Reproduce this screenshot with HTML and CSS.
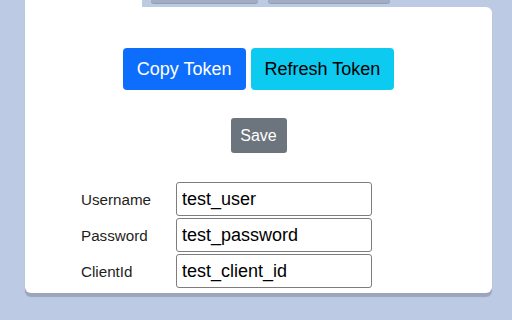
FILE: index.html
```html
<!DOCTYPE html>
<html lang="en">
<head>
    <meta charset="UTF-8">
    <title>Token Settings</title>
    <link rel="stylesheet" href="styles.css">
</head>
<body>
    <div class="container">
        <nav class="tabs">
            <div class="tab active"></div>
            <div class="tab tab-one"></div>
            <div class="tab tab-two"></div>
        </nav>

        <div class="card">
            <div class="token-actions">
                <button class="btn btn-copy">Copy Token</button>
                <button class="btn btn-refresh">Refresh Token</button>
            </div>

            <div class="save-row">
                <button class="btn btn-save">Save</button>
            </div>

            <form class="credentials">
                <label for="username">Username</label>
                <input type="text" id="username" value="test_user">

                <label for="password">Password</label>
                <input type="text" id="password" value="test_password">

                <label for="clientId">ClientId</label>
                <input type="text" id="clientId" value="test_client_id">
            </form>
        </div>
    </div>
</body>
</html>
```

FILE: styles.css
```css
* {
    margin: 0;
    padding: 0;
    box-sizing: border-box;
}

body {
    font-family: 'Liberation Sans', Arial, Helvetica, sans-serif;
    background: #bdcae3;
    height: 320px;
    overflow: hidden;
}

.container {
    width: 467px;
    margin-left: 25px;
}

.tabs {
    display: flex;
    height: 7px;
    align-items: flex-start;
}

.tab {
    height: 3px;
    background: #a2adc3;
    border-radius: 0 0 6px 6px;
    box-shadow: 0 1px 0 #939eb5;
}

.tab.active {
    width: 117px;
    height: 7px;
    background: white;
    border-radius: 0;
    box-shadow: none;
}

.tab-one {
    width: 107px;
    margin-left: 9px;
}

.tab-two {
    width: 122px;
    margin-left: 10px;
}

.card {
    background: white;
    height: 286px;
    border-radius: 0 6px 6px 6px;
    box-shadow: 0 4px 1px #9ba5bc;
    padding-top: 41px;
}

.token-actions {
    display: flex;
    justify-content: center;
    gap: 5px;
}

.btn {
    border: none;
    border-radius: 4px;
    font-family: inherit;
    cursor: pointer;
}

.btn-copy,
.btn-refresh {
    height: 42px;
    font-size: 18px;
    padding: 0 14px;
}

.btn-copy {
    background: #0d6efd;
    color: white;
}

.btn-refresh {
    background: #0dcaf0;
    color: black;
}

.save-row {
    display: flex;
    justify-content: center;
    margin-top: 28px;
}

.btn-save {
    width: 56px;
    height: 35px;
    background: #6c757d;
    color: white;
    font-size: 16px;
    border-radius: 3px;
}

.credentials {
    display: grid;
    grid-template-columns: 95px 196px;
    row-gap: 2px;
    align-items: center;
    margin: 29px 0 0 56px;
}

.credentials label {
    font-size: 15.2px;
    color: #1e1e1e;
}

.credentials input {
    height: 34px;
    border: 1px solid #7d7d7d;
    border-radius: 3px;
    padding: 0 5px;
    font-family: inherit;
    font-size: 18px;
    color: black;
}
```
